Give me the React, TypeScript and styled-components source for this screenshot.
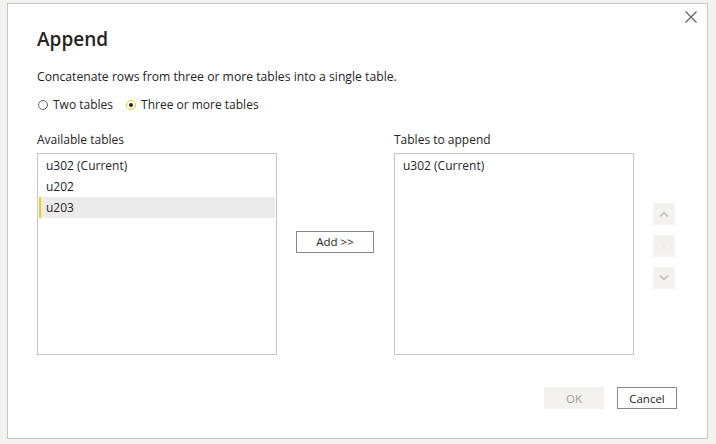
import React, { useState } from 'react'
import styled, { createGlobalStyle } from 'styled-components'

const GlobalStyle = createGlobalStyle`
  html, body {
    margin: 0;
    padding: 0;
    background: #f3f2f1;
  }
  body {
    font-family: 'Open Sans', 'Noto Sans', sans-serif;
    color: #252423;
  }
`

const Page = styled.div`
  padding: 3px 0 0 7px;
`

const Dialog = styled.div`
  position: relative;
  box-sizing: border-box;
  width: 701px;
  height: 436px;
  background: #fff;
  border: 1px solid #c8c6c4;
  padding: 20px 30px 0 29px;
  display: flex;
  flex-direction: column;
`

const CloseButton = styled.button`
  position: absolute;
  top: 3px;
  right: 6px;
  width: 20px;
  height: 20px;
  padding: 0;
  border: none;
  background: transparent;
  display: flex;
  align-items: center;
  justify-content: center;
`

const Title = styled.h1`
  margin: 0;
  font-size: 19px;
  font-weight: 600;
  line-height: 30px;
  color: #252423;
`

const Description = styled.p`
  margin: 14px 0 0;
  font-size: 12.2px;
  line-height: 18px;
`

const RadioRow = styled.div`
  display: flex;
  gap: 12px;
  margin-top: 10px;
  font-size: 12px;
  line-height: 18px;
`

const RadioLabel = styled.label`
  display: flex;
  align-items: center;
  gap: 5px;
  cursor: pointer;
`

const RadioDot = styled.span<{ $checked: boolean }>`
  box-sizing: border-box;
  width: 10px;
  height: 10px;
  margin-left: 1px;
  border-radius: 50%;
  border: 1.5px solid ${(p) => (p.$checked ? '#f2c811' : '#605e5c')};
  display: flex;
  align-items: center;
  justify-content: center;
  margin-top: -1px;

  &::after {
    content: '';
    width: 4px;
    height: 4px;
    border-radius: 50%;
    background: ${(p) => (p.$checked ? '#252423' : 'transparent')};
  }
`

const Columns = styled.div`
  display: flex;
  margin-top: 17px;
`

const ListColumn = styled.div`
  display: flex;
  flex-direction: column;
  width: 240px;
`

const ListLabel = styled.div`
  font-size: 12px;
  line-height: 18px;
  margin-bottom: 4px;
`

const ListBox = styled.div`
  box-sizing: border-box;
  height: 202px;
  border: 1px solid #c8c6c4;
  padding: 1px;
`

const ListItem = styled.div<{ $selected?: boolean }>`
  height: 21px;
  line-height: 21px;
  padding-left: 5px;
  font-size: 12px;
  background: ${(p) => (p.$selected ? '#ebebeb' : 'transparent')};
  border-left: 2px solid ${(p) => (p.$selected ? '#f2c811' : 'transparent')};
`

const AddColumn = styled.div`
  width: 117px;
  padding: 98px 0 0 19px;
  box-sizing: border-box;
`

const OutlineButton = styled.button`
  box-sizing: border-box;
  height: 22px;
  border: 1px solid #8a8886;
  background: #fff;
  font-family: inherit;
  font-size: 11.5px;
  color: #252423;
  padding: 0;
`

const AddButton = styled(OutlineButton)`
  width: 78px;
`

const OrderColumn = styled.div`
  display: flex;
  flex-direction: column;
  gap: 10px;
  margin-left: 19px;
  padding-top: 72px;
`

const OrderButton = styled.button`
  width: 22px;
  height: 22px;
  border: none;
  padding: 0;
  background: #f3f2f1;
  display: flex;
  align-items: center;
  justify-content: center;
`

const Footer = styled.div`
  margin-top: auto;
  margin-bottom: 29px;
  display: flex;
  justify-content: flex-end;
  gap: 13px;
`

const FooterButton = styled(OutlineButton)<{ $disabled?: boolean }>`
  width: 60px;
  border-color: ${(p) => (p.$disabled ? '#f3f2f1' : '#8a8886')};
  background: ${(p) => (p.$disabled ? '#f3f2f1' : '#fff')};
  color: ${(p) => (p.$disabled ? '#a19f9d' : '#252423')};
`

const Chevron = ({ up }: { up?: boolean }) => (
  <svg width="10" height="6" viewBox="0 0 10 6">
    <path
      d={up ? 'M1 5.5 L5 1.5 L9 5.5' : 'M1 0.5 L5 4.5 L9 0.5'}
      fill="none"
      stroke="#c8c6c4"
      strokeWidth="1.8"
    />
  </svg>
)

const available = ['u302 (Current)', 'u202', 'u203']

export default function App() {
  const [mode, setMode] = useState<'two' | 'many'>('many')
  const [selected, setSelected] = useState(2)

  return (
    <Page>
      <GlobalStyle />
      <Dialog>
        <CloseButton aria-label="Close">
          <svg width="12" height="12" viewBox="0 0 12 12">
            <path d="M0.5 0.5 L11.5 11.5 M11.5 0.5 L0.5 11.5" stroke="#605e5c" strokeWidth="1.1" />
          </svg>
        </CloseButton>
        <Title>Append</Title>
        <Description>Concatenate rows from three or more tables into a single table.</Description>
        <RadioRow>
          <RadioLabel onClick={() => setMode('two')}>
            <RadioDot $checked={mode === 'two'} />
            Two tables
          </RadioLabel>
          <RadioLabel onClick={() => setMode('many')}>
            <RadioDot $checked={mode === 'many'} />
            Three or more tables
          </RadioLabel>
        </RadioRow>
        <Columns>
          <ListColumn>
            <ListLabel>Available tables</ListLabel>
            <ListBox>
              {available.map((name, i) => (
                <ListItem key={name} $selected={i === selected} onClick={() => setSelected(i)}>
                  {name}
                </ListItem>
              ))}
            </ListBox>
          </ListColumn>
          <AddColumn>
            <AddButton>Add &gt;&gt;</AddButton>
          </AddColumn>
          <ListColumn>
            <ListLabel>Tables to append</ListLabel>
            <ListBox>
              <ListItem>u302 (Current)</ListItem>
            </ListBox>
          </ListColumn>
          <OrderColumn>
            <OrderButton aria-label="Move up">
              <Chevron up />
            </OrderButton>
            <OrderButton aria-label="Remove">
              <svg width="8" height="8" viewBox="0 0 8 8">
                <path d="M0.5 0.5 L7.5 7.5 M7.5 0.5 L0.5 7.5" stroke="#edebe9" strokeWidth="1.2" />
              </svg>
            </OrderButton>
            <OrderButton aria-label="Move down">
              <Chevron />
            </OrderButton>
          </OrderColumn>
        </Columns>
        <Footer>
          <FooterButton $disabled>OK</FooterButton>
          <FooterButton>Cancel</FooterButton>
        </Footer>
      </Dialog>
    </Page>
  )
}
